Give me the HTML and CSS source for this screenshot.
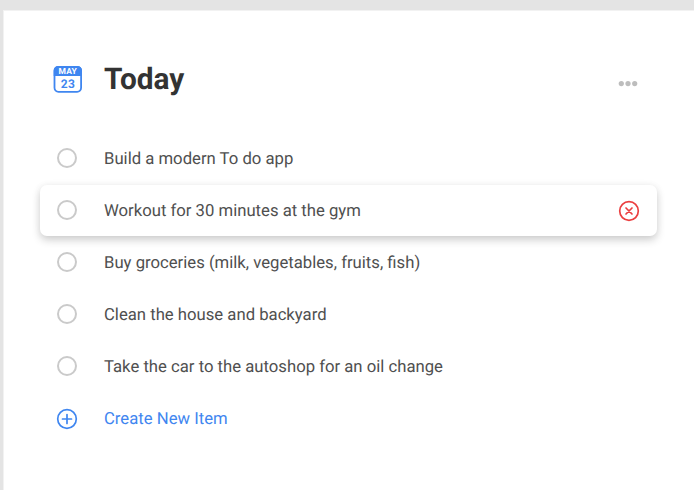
FILE: index.html
```
<!DOCTYPE html>
<html lang="en">
<head>
<meta charset="utf-8">
<title>Today</title>
<link rel="stylesheet" href="styles.css">
</head>
<body>
<main class="panel">
  <header class="header">
    <svg class="calendar" viewBox="0 0 30 28" role="img" aria-label="May 23">
      <rect x="1.500" y="1.800" width="26.600" height="25" rx="4" fill="#fff" stroke="#3f86f0" stroke-width="1.800"/>
      <path d="M0.700 11V5.500a4.500 4.500 0 0 1 4.500-4.500h19.300a4.500 4.500 0 0 1 4.500 4.500v5.500z" fill="#3f86f0"/>
      <text class="month" x="14.800" y="9.200" text-anchor="middle">MAY</text>
      <text class="day" x="15" y="22.500" text-anchor="middle">23</text>
    </svg>
    <h1>Today</h1>
    <svg class="more" viewBox="0 0 20 6" role="img" aria-label="More">
      <circle cx="3.300" cy="2.600" r="2.600"/><circle cx="10" cy="2.600" r="2.600"/><circle cx="16.700" cy="2.600" r="2.600"/>
    </svg>
  </header>
  <ul class="list">
    <li class="item"><span class="check"></span><span class="label">Build a modern To do app</span></li>
    <li class="item active"><span class="check"></span><span class="label">Workout for 30 minutes at the gym</span>
      <svg class="delete" viewBox="0 0 22 22"><circle cx="11" cy="11" r="9.300"/><path d="M8 8l6 6M14 8l-6 6"/></svg>
    </li>
    <li class="item"><span class="check"></span><span class="label">Buy groceries (milk, vegetables, fruits, fish)</span></li>
    <li class="item"><span class="check"></span><span class="label">Clean the house and backyard</span></li>
    <li class="item"><span class="check"></span><span class="label">Take the car to the autoshop for an oil change</span></li>
    <li class="item create">
      <svg class="add" viewBox="0 0 22 22"><circle cx="11" cy="11" r="9.300"/><path d="M11 6.500v9M6.500 11h9"/></svg>
      <span class="label">Create New Item</span>
    </li>
  </ul>
</main>
</body>
</html>
```
FILE: styles.css
```
* { box-sizing: border-box; }
body {
  margin: 0;
  height: 490px;
  padding: 10px 0 0 3px;
  overflow: hidden;
  background: #e4e4e4;
  font-family: Roboto, "Liberation Sans", sans-serif;
  text-rendering: geometricPrecision;
}
.panel {
  height: 480px;
  padding: 45px 37px 0;
  background: #fff;
  border-top: 1px solid #f2f2f2;
  border-left: 1px solid #f2f2f2;
}
.header {
  display: flex;
  align-items: center;
  height: 46px;
  padding: 0 19px 0 12px;
}
.calendar { width: 30px; height: 28px; flex: none; }
.month, .day { font-family: Roboto, sans-serif; font-weight: 700; }
.month { font-size: 8.500px; fill: #fff; letter-spacing: 0.200px; }
.day { font-size: 12px; fill: #3f86f0; letter-spacing: 0.400px; }
h1 {
  margin: 1px 0 0 21px;
  font-size: 29.800px;
  line-height: 45px;
  font-weight: 700;
  color: #333;
}
.more { width: 20px; height: 6px; margin: 9px 0 0 auto; fill: #bdbdbd; }
.list {
  display: grid;
  gap: 0.900px;
  margin: 31.600px 0 0 -1px;
  padding: 0;
  list-style: none;
}
.item {
  display: flex;
  align-items: center;
  height: 51px;
  padding: 0 18px 0 17px;
  border-radius: 7px;
  font-size: 16.700px;
  color: #4f4f4f;
}
.active {
  background: #fff;
  box-shadow: 0 4px 9px rgba(0, 0, 0, 0.19), 0 0 8px rgba(0, 0, 0, 0.04);
}
.check {
  flex: none;
  width: 20px;
  height: 20px;
  margin-top: -2px;
  border: 2px solid #cacaca;
  border-radius: 50%;
}
.label { margin: 2px 0 0 27px; line-height: 20px; white-space: nowrap; }
.delete, .add {
  flex: none;
  width: 22px;
  height: 22px;
  fill: none;
  stroke-width: 1.700;
  stroke-linecap: round;
}
.delete { margin: 0 -1px 0 auto; stroke: #eb3f40; }
.add { margin-left: -1px; stroke: #3f86f0; }
.add + .label { margin-left: 26px; }
.create { color: #3f86f0; }
```
